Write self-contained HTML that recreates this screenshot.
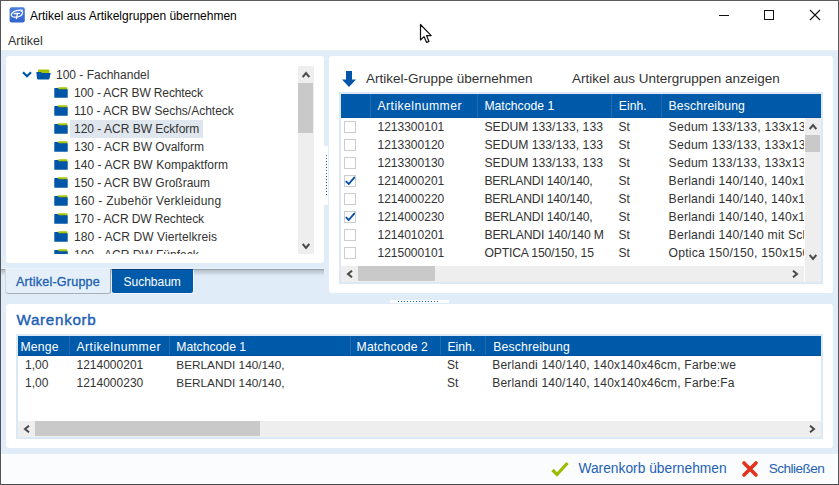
<!DOCTYPE html>
<html><head><meta charset="utf-8">
<style>
*{margin:0;padding:0;box-sizing:border-box}
html,body{width:839px;height:485px;overflow:hidden;background:#fff}
body{position:relative;font-family:"Liberation Sans",sans-serif;font-size:12px;color:#333}
.a{position:absolute}
.t{position:absolute;white-space:nowrap}
.clip{position:absolute;overflow:hidden}
</style></head><body>

<svg class="a" style="left:9px;top:7px" width="16" height="16" viewBox="0 0 16 16">
  <defs><linearGradient id="ig" x1="0" y1="0" x2="0" y2="1"><stop offset="0" stop-color="#4a7ee0"/><stop offset="1" stop-color="#3265cc"/></linearGradient></defs>
  <rect x="0.6" y="0.2" width="15.2" height="15.2" rx="2" fill="url(#ig)"/>
  <path d="M13.8 3.4 C10 2.6 4.5 3.6 2.6 6.6 C1.4 8.6 3.2 10.2 6.2 10.2 C9.8 10.2 13.6 8.4 13.6 5.6 C13.6 4.8 12.8 4.3 11.6 4.2" fill="none" stroke="#fff" stroke-width="1.25"/>
  <path d="M4.6 6.9 C5.5 6.4 7 6.5 10.9 6.3 M8.6 6.4 L7.3 12.2" fill="none" stroke="#fff" stroke-width="1.35"/>
</svg>
<div class="t" style="left:30px;top:8.34px;font-size:12px;line-height:17px;color:#000;font-weight:normal;">Artikel aus Artikelgruppen übernehmen</div>
<div class="a" style="left:719px;top:15px;width:10px;height:1px;background:#111;"></div>
<div class="a" style="left:764px;top:10px;width:10px;height:10px;border:1px solid #111"></div>
<svg class="a" style="left:809px;top:9px" width="12" height="12" viewBox="0 0 12 12"><path d="M1 1 L11 11 M11 1 L1 11" stroke="#111" stroke-width="1.1"/></svg>
<svg class="a" style="left:419px;top:23px" width="14" height="21" viewBox="0 0 14 21"><path d="M1.5 1.5 L1.5 17 L5 13.6 L7.6 19.4 L10 18.4 L7.5 12.6 L12.2 12.6 Z" fill="#fff" stroke="#111" stroke-width="1.2" stroke-linejoin="round"/></svg>
<div class="t" style="left:8px;top:31.67px;font-size:12.5px;line-height:18px;color:#333;font-weight:normal;">Artikel</div>
<div class="a" style="left:1px;top:50px;width:837px;height:1px;background:#eaeef2;"></div>
<div class="a" style="left:1px;top:51px;width:837px;height:403px;background:#e0edf9;"></div>
<div class="a" style="left:6px;top:56px;width:318px;height:207px;background:#fff;border-radius:3px"></div>
<div class="clip" style="left:6px;top:60px;width:290px;height:194px">
<svg class="a" style="left:16px;top:11px" width="10" height="8" viewBox="0 0 10 8"><path d="M1 1.3 L5 5.3 L9 1.3" fill="none" stroke="#0156a8" stroke-width="2.2"/></svg>
<div class="a" style="left:30px;top:9px">
<svg class="a" style="left:0px;top:0px" width="15" height="11" viewBox="0 0 15 11"><path d="M2 0.5 H12.5 Q13.3 0.5 13.3 1.3 V4 H2 Z" fill="#a8c400"/><path d="M0.3 3 H5 L6 4 H14.7 L13.5 9.6 Q13.3 10.5 12.4 10.5 H2.2 Q1.2 10.5 1 9.6 Z" fill="#0156a8"/></svg>
</div>
<div class="t" style="left:50px;top:7.34px;font-size:12px;line-height:17px;color:#333;font-weight:normal;">100 - Fachhandel</div>
<div class="a" style="left:48px;top:27px">
<svg class="a" style="left:0px;top:0px" width="14" height="11" viewBox="0 0 15 11" preserveAspectRatio="none"><path d="M4.5 0.3 H13.6 Q14.3 0.3 14.3 1 V4 H4.5 Z" fill="#a8c400"/><path d="M0.3 1.6 Q0.3 1 1 1 H4.2 L5.4 2.2 H14.7 V10.3 Q14.7 10.7 14.3 10.7 H0.7 Q0.3 10.7 0.3 10.3 Z" fill="#0156a8"/></svg>
</div>
<div class="t" style="left:68px;top:25.34px;font-size:12px;line-height:17px;color:#333;font-weight:normal;letter-spacing:-0.12px;">100 - ACR BW Rechteck</div>
<div class="a" style="left:48px;top:45px">
<svg class="a" style="left:0px;top:0px" width="14" height="11" viewBox="0 0 15 11" preserveAspectRatio="none"><path d="M4.5 0.3 H13.6 Q14.3 0.3 14.3 1 V4 H4.5 Z" fill="#a8c400"/><path d="M0.3 1.6 Q0.3 1 1 1 H4.2 L5.4 2.2 H14.7 V10.3 Q14.7 10.7 14.3 10.7 H0.7 Q0.3 10.7 0.3 10.3 Z" fill="#0156a8"/></svg>
</div>
<div class="t" style="left:68px;top:43.34px;font-size:12px;line-height:17px;color:#333;font-weight:normal;letter-spacing:0px;">110 - ACR BW Sechs/Achteck</div>
<div class="a" style="left:64px;top:60px;width:133px;height:18px;background:#dfe6ee;"></div>
<div class="a" style="left:48px;top:63px">
<svg class="a" style="left:0px;top:0px" width="14" height="11" viewBox="0 0 15 11" preserveAspectRatio="none"><path d="M4.5 0.3 H13.6 Q14.3 0.3 14.3 1 V4 H4.5 Z" fill="#a8c400"/><path d="M0.3 1.6 Q0.3 1 1 1 H4.2 L5.4 2.2 H14.7 V10.3 Q14.7 10.7 14.3 10.7 H0.7 Q0.3 10.7 0.3 10.3 Z" fill="#0156a8"/></svg>
</div>
<div class="t" style="left:68px;top:61.34px;font-size:12px;line-height:17px;color:#333;font-weight:normal;letter-spacing:0px;">120 - ACR BW Eckform</div>
<div class="a" style="left:48px;top:81px">
<svg class="a" style="left:0px;top:0px" width="14" height="11" viewBox="0 0 15 11" preserveAspectRatio="none"><path d="M4.5 0.3 H13.6 Q14.3 0.3 14.3 1 V4 H4.5 Z" fill="#a8c400"/><path d="M0.3 1.6 Q0.3 1 1 1 H4.2 L5.4 2.2 H14.7 V10.3 Q14.7 10.7 14.3 10.7 H0.7 Q0.3 10.7 0.3 10.3 Z" fill="#0156a8"/></svg>
</div>
<div class="t" style="left:68px;top:79.34px;font-size:12px;line-height:17px;color:#333;font-weight:normal;letter-spacing:0px;">130 - ACR BW Ovalform</div>
<div class="a" style="left:48px;top:99px">
<svg class="a" style="left:0px;top:0px" width="14" height="11" viewBox="0 0 15 11" preserveAspectRatio="none"><path d="M4.5 0.3 H13.6 Q14.3 0.3 14.3 1 V4 H4.5 Z" fill="#a8c400"/><path d="M0.3 1.6 Q0.3 1 1 1 H4.2 L5.4 2.2 H14.7 V10.3 Q14.7 10.7 14.3 10.7 H0.7 Q0.3 10.7 0.3 10.3 Z" fill="#0156a8"/></svg>
</div>
<div class="t" style="left:68px;top:97.34px;font-size:12px;line-height:17px;color:#333;font-weight:normal;letter-spacing:0.06px;">140 - ACR BW Kompaktform</div>
<div class="a" style="left:48px;top:117px">
<svg class="a" style="left:0px;top:0px" width="14" height="11" viewBox="0 0 15 11" preserveAspectRatio="none"><path d="M4.5 0.3 H13.6 Q14.3 0.3 14.3 1 V4 H4.5 Z" fill="#a8c400"/><path d="M0.3 1.6 Q0.3 1 1 1 H4.2 L5.4 2.2 H14.7 V10.3 Q14.7 10.7 14.3 10.7 H0.7 Q0.3 10.7 0.3 10.3 Z" fill="#0156a8"/></svg>
</div>
<div class="t" style="left:68px;top:115.34px;font-size:12px;line-height:17px;color:#333;font-weight:normal;letter-spacing:0px;">150 - ACR BW Großraum</div>
<div class="a" style="left:48px;top:135px">
<svg class="a" style="left:0px;top:0px" width="14" height="11" viewBox="0 0 15 11" preserveAspectRatio="none"><path d="M4.5 0.3 H13.6 Q14.3 0.3 14.3 1 V4 H4.5 Z" fill="#a8c400"/><path d="M0.3 1.6 Q0.3 1 1 1 H4.2 L5.4 2.2 H14.7 V10.3 Q14.7 10.7 14.3 10.7 H0.7 Q0.3 10.7 0.3 10.3 Z" fill="#0156a8"/></svg>
</div>
<div class="t" style="left:68px;top:133.34px;font-size:12px;line-height:17px;color:#333;font-weight:normal;letter-spacing:0.24px;">160 - Zubehör Verkleidung</div>
<div class="a" style="left:48px;top:153px">
<svg class="a" style="left:0px;top:0px" width="14" height="11" viewBox="0 0 15 11" preserveAspectRatio="none"><path d="M4.5 0.3 H13.6 Q14.3 0.3 14.3 1 V4 H4.5 Z" fill="#a8c400"/><path d="M0.3 1.6 Q0.3 1 1 1 H4.2 L5.4 2.2 H14.7 V10.3 Q14.7 10.7 14.3 10.7 H0.7 Q0.3 10.7 0.3 10.3 Z" fill="#0156a8"/></svg>
</div>
<div class="t" style="left:68px;top:151.34px;font-size:12px;line-height:17px;color:#333;font-weight:normal;letter-spacing:-0.1px;">170 - ACR DW Rechteck</div>
<div class="a" style="left:48px;top:171px">
<svg class="a" style="left:0px;top:0px" width="14" height="11" viewBox="0 0 15 11" preserveAspectRatio="none"><path d="M4.5 0.3 H13.6 Q14.3 0.3 14.3 1 V4 H4.5 Z" fill="#a8c400"/><path d="M0.3 1.6 Q0.3 1 1 1 H4.2 L5.4 2.2 H14.7 V10.3 Q14.7 10.7 14.3 10.7 H0.7 Q0.3 10.7 0.3 10.3 Z" fill="#0156a8"/></svg>
</div>
<div class="t" style="left:68px;top:169.34px;font-size:12px;line-height:17px;color:#333;font-weight:normal;letter-spacing:0.08px;">180 - ACR DW Viertelkreis</div>
<div class="a" style="left:48px;top:189px">
<svg class="a" style="left:0px;top:0px" width="14" height="11" viewBox="0 0 15 11" preserveAspectRatio="none"><path d="M4.5 0.3 H13.6 Q14.3 0.3 14.3 1 V4 H4.5 Z" fill="#a8c400"/><path d="M0.3 1.6 Q0.3 1 1 1 H4.2 L5.4 2.2 H14.7 V10.3 Q14.7 10.7 14.3 10.7 H0.7 Q0.3 10.7 0.3 10.3 Z" fill="#0156a8"/></svg>
</div>
<div class="t" style="left:68px;top:187.34px;font-size:12px;line-height:17px;color:#333;font-weight:normal;letter-spacing:0px;">190 - ACR DW Fünfeck</div>
</div>
<div class="a" style="left:298px;top:66px;width:16px;height:188px;background:#eeeeee;"></div>
<div class="a" style="left:298px;top:83px;width:15px;height:50px;background:#c9c9c9;"></div>
<svg class="a" style="left:302px;top:71px" width="8" height="7" viewBox="0 0 8 7"><path d="M0.7 6 L4 2 L7.3 6" fill="none" stroke="#4a4a4a" stroke-width="2"/></svg>
<svg class="a" style="left:302px;top:243px" width="8" height="7" viewBox="0 0 8 7"><path d="M0.7 1 L4 5 L7.3 1" fill="none" stroke="#4a4a4a" stroke-width="2"/></svg>
<div class="a" style="left:324px;top:146px;width:4px;height:59px;background:#fff;"></div>
<div class="a" style="left:326px;top:155px;width:1px;height:1px;background:#1f64b4;"></div>
<div class="a" style="left:326px;top:158px;width:1px;height:1px;background:#1f64b4;"></div>
<div class="a" style="left:326px;top:161px;width:1px;height:1px;background:#1f64b4;"></div>
<div class="a" style="left:326px;top:164px;width:1px;height:1px;background:#1f64b4;"></div>
<div class="a" style="left:326px;top:167px;width:1px;height:1px;background:#1f64b4;"></div>
<div class="a" style="left:326px;top:170px;width:1px;height:1px;background:#1f64b4;"></div>
<div class="a" style="left:326px;top:173px;width:1px;height:1px;background:#1f64b4;"></div>
<div class="a" style="left:326px;top:176px;width:1px;height:1px;background:#1f64b4;"></div>
<div class="a" style="left:326px;top:179px;width:1px;height:1px;background:#1f64b4;"></div>
<div class="a" style="left:326px;top:182px;width:1px;height:1px;background:#1f64b4;"></div>
<div class="a" style="left:326px;top:185px;width:1px;height:1px;background:#1f64b4;"></div>
<div class="a" style="left:326px;top:188px;width:1px;height:1px;background:#1f64b4;"></div>
<div class="a" style="left:326px;top:191px;width:1px;height:1px;background:#1f64b4;"></div>
<div class="a" style="left:326px;top:194px;width:1px;height:1px;background:#1f64b4;"></div>
<div class="a" style="left:1px;top:268px;width:323px;height:1px;background:#e8f3fd"></div>
<div class="a" style="left:1px;top:269px;width:323px;height:1px;background:#96a1ab"></div>
<div class="a" style="left:1px;top:270px;width:323px;height:6px;background:linear-gradient(#b4bec8,#e0edf9)"></div>
<div class="a" style="left:5px;top:269px;width:106px;height:25px;background:linear-gradient(90deg,#b8c0c8,#e8eef5 1px,#e8eef5 104px,#9aa3ad 105px);border-radius:0 0 3px 3px"></div>
<div class="a" style="left:6px;top:269px;width:104px;height:24px;background:#e4eff9;border-radius:0 0 2px 2px;box-shadow:0 1px 0 #a6aeb6"></div>
<div class="t" style="left:16px;top:273.13px;font-size:12.6px;line-height:18px;color:#1b5eb0;font-weight:normal;letter-spacing:0.2px;-webkit-text-stroke:0.3px #1b5eb0;">Artikel-Gruppe</div>
<div class="a" style="left:112px;top:269px;width:81px;height:24px;background:#005aaa;border-top:1px solid #003e7e;border-radius:0 0 2px 2px;box-shadow:1px 1px 0 #f4f8fc"></div>
<div class="t" style="left:123.5px;top:274.34px;font-size:12px;line-height:17px;color:#fff;font-weight:normal;">Suchbaum</div>
<div class="a" style="left:329px;top:56px;width:504px;height:237px;background:#fff;border-radius:3px"></div>
<svg class="a" style="left:342px;top:71px" width="14" height="16" viewBox="0 0 14 16"><path d="M4 0 H10 V8.4 H14 L7 15.9 L0 8.4 H4 Z" fill="#0156a8"/></svg>
<div class="t" style="left:366px;top:69.22px;font-size:13.5px;line-height:19px;color:#333;font-weight:normal;">Artikel-Gruppe übernehmen</div>
<div class="t" style="left:572px;top:69.22px;font-size:13.5px;line-height:19px;color:#333;font-weight:normal;">Artikel aus Untergruppen anzeigen</div>
<div class="a" style="left:339px;top:92px;width:484px;height:192px;background:#dbe8f6;"></div>
<div class="a" style="left:341px;top:94px;width:480px;height:188px;background:#fff;"></div>
<div class="a" style="left:341px;top:94px;width:480px;height:24px;background:#005aaa;"></div>
<div class="a" style="left:341px;top:117px;width:480px;height:1px;background:#00509f;"></div>
<div class="a" style="left:370px;top:94px;width:1px;height:24px;background:#2767b0;"></div>
<div class="a" style="left:477px;top:94px;width:1px;height:24px;background:#2767b0;"></div>
<div class="a" style="left:611px;top:94px;width:1px;height:24px;background:#2767b0;"></div>
<div class="a" style="left:661px;top:94px;width:1px;height:24px;background:#2767b0;"></div>
<div class="t" style="left:377.5px;top:98.47px;font-size:12.2px;line-height:17px;color:#fff;font-weight:normal;letter-spacing:0.45px;">Artikelnummer</div>
<div class="t" style="left:484.4px;top:98.47px;font-size:12.2px;line-height:17px;color:#fff;font-weight:normal;">Matchcode 1</div>
<div class="t" style="left:618.8px;top:98.47px;font-size:12.2px;line-height:17px;color:#fff;font-weight:normal;">Einh.</div>
<div class="t" style="left:668.4px;top:98.47px;font-size:12.2px;line-height:17px;color:#fff;font-weight:normal;letter-spacing:0.18px;">Beschreibung</div>
<div class="clip" style="left:341px;top:118px;width:464px;height:148px">
<div class="a" style="left:3px;top:3px;width:12px;height:12px;border:1px solid #cdcdcd;background:#fff"></div>
<div class="t" style="left:36.5px;top:1.34px;font-size:12px;line-height:17px;color:#333;font-weight:normal;">1213300101</div>
<div class="t" style="left:143.39999999999998px;top:1.27px;font-size:12.2px;line-height:17px;color:#333;font-weight:normal;letter-spacing:0px;">SEDUM 133/133, 133</div>
<div class="t" style="left:277.5px;top:1.34px;font-size:12px;line-height:17px;color:#333;font-weight:normal;">St</div>
<div class="clip" style="left:327px;top:-1px;width:136px;height:18px">
<div class="t" style="left:0.6px;top:2.27px;font-size:12.2px;line-height:17px;color:#333;font-weight:normal;letter-spacing:0.2px;">Sedum 133/133, 133x133x46cm</div>
</div>
<div class="a" style="left:3px;top:21px;width:12px;height:12px;border:1px solid #cdcdcd;background:#fff"></div>
<div class="t" style="left:36.5px;top:19.34px;font-size:12px;line-height:17px;color:#333;font-weight:normal;">1213300120</div>
<div class="t" style="left:143.39999999999998px;top:19.27px;font-size:12.2px;line-height:17px;color:#333;font-weight:normal;letter-spacing:0px;">SEDUM 133/133, 133</div>
<div class="t" style="left:277.5px;top:19.34px;font-size:12px;line-height:17px;color:#333;font-weight:normal;">St</div>
<div class="clip" style="left:327px;top:17px;width:136px;height:18px">
<div class="t" style="left:0.6px;top:2.27px;font-size:12.2px;line-height:17px;color:#333;font-weight:normal;letter-spacing:0.2px;">Sedum 133/133, 133x133x46cm</div>
</div>
<div class="a" style="left:3px;top:39px;width:12px;height:12px;border:1px solid #cdcdcd;background:#fff"></div>
<div class="t" style="left:36.5px;top:37.34px;font-size:12px;line-height:17px;color:#333;font-weight:normal;">1213300130</div>
<div class="t" style="left:143.39999999999998px;top:37.27px;font-size:12.2px;line-height:17px;color:#333;font-weight:normal;letter-spacing:0px;">SEDUM 133/133, 133</div>
<div class="t" style="left:277.5px;top:37.34px;font-size:12px;line-height:17px;color:#333;font-weight:normal;">St</div>
<div class="clip" style="left:327px;top:35px;width:136px;height:18px">
<div class="t" style="left:0.6px;top:2.27px;font-size:12.2px;line-height:17px;color:#333;font-weight:normal;letter-spacing:0.2px;">Sedum 133/133, 133x133x46cm</div>
</div>
<div class="a" style="left:3px;top:57px;width:12px;height:12px;border:1px solid #cdcdcd;background:#fff"></div>
<svg class="a" style="left:3px;top:57px" width="12" height="12" viewBox="0 0 12 12"><path d="M2.3 6.6 L4.8 9 L10.2 2.6" fill="none" stroke="#0a52a6" stroke-width="1.9" stroke-linecap="round" stroke-linejoin="round"/></svg>
<div class="t" style="left:36.5px;top:55.34px;font-size:12px;line-height:17px;color:#333;font-weight:normal;">1214000201</div>
<div class="t" style="left:143.39999999999998px;top:55.27px;font-size:12.2px;line-height:17px;color:#333;font-weight:normal;letter-spacing:-0.22px;">BERLANDI 140/140,</div>
<div class="t" style="left:277.5px;top:55.34px;font-size:12px;line-height:17px;color:#333;font-weight:normal;">St</div>
<div class="clip" style="left:327px;top:53px;width:136px;height:18px">
<div class="t" style="left:0.6px;top:2.27px;font-size:12.2px;line-height:17px;color:#333;font-weight:normal;letter-spacing:0.2px;">Berlandi 140/140, 140x140x46cm</div>
</div>
<div class="a" style="left:3px;top:75px;width:12px;height:12px;border:1px solid #cdcdcd;background:#fff"></div>
<div class="t" style="left:36.5px;top:73.34px;font-size:12px;line-height:17px;color:#333;font-weight:normal;">1214000220</div>
<div class="t" style="left:143.39999999999998px;top:73.27px;font-size:12.2px;line-height:17px;color:#333;font-weight:normal;letter-spacing:-0.22px;">BERLANDI 140/140,</div>
<div class="t" style="left:277.5px;top:73.34px;font-size:12px;line-height:17px;color:#333;font-weight:normal;">St</div>
<div class="clip" style="left:327px;top:71px;width:136px;height:18px">
<div class="t" style="left:0.6px;top:2.27px;font-size:12.2px;line-height:17px;color:#333;font-weight:normal;letter-spacing:0.2px;">Berlandi 140/140, 140x140x46cm</div>
</div>
<div class="a" style="left:3px;top:93px;width:12px;height:12px;border:1px solid #cdcdcd;background:#fff"></div>
<svg class="a" style="left:3px;top:93px" width="12" height="12" viewBox="0 0 12 12"><path d="M2.3 6.6 L4.8 9 L10.2 2.6" fill="none" stroke="#0a52a6" stroke-width="1.9" stroke-linecap="round" stroke-linejoin="round"/></svg>
<div class="t" style="left:36.5px;top:91.34px;font-size:12px;line-height:17px;color:#333;font-weight:normal;">1214000230</div>
<div class="t" style="left:143.39999999999998px;top:91.27px;font-size:12.2px;line-height:17px;color:#333;font-weight:normal;letter-spacing:-0.22px;">BERLANDI 140/140,</div>
<div class="t" style="left:277.5px;top:91.34px;font-size:12px;line-height:17px;color:#333;font-weight:normal;">St</div>
<div class="clip" style="left:327px;top:89px;width:136px;height:18px">
<div class="t" style="left:0.6px;top:2.27px;font-size:12.2px;line-height:17px;color:#333;font-weight:normal;letter-spacing:0.2px;">Berlandi 140/140, 140x140x46cm</div>
</div>
<div class="a" style="left:3px;top:111px;width:12px;height:12px;border:1px solid #cdcdcd;background:#fff"></div>
<div class="t" style="left:36.5px;top:109.34px;font-size:12px;line-height:17px;color:#333;font-weight:normal;">1214010201</div>
<div class="t" style="left:143.39999999999998px;top:109.27px;font-size:12.2px;line-height:17px;color:#333;font-weight:normal;letter-spacing:-0.14px;">BERLANDI 140/140 M</div>
<div class="t" style="left:277.5px;top:109.34px;font-size:12px;line-height:17px;color:#333;font-weight:normal;">St</div>
<div class="clip" style="left:327px;top:107px;width:136px;height:18px">
<div class="t" style="left:0.6px;top:2.27px;font-size:12.2px;line-height:17px;color:#333;font-weight:normal;letter-spacing:0.2px;">Berlandi 140/140 mit Schale</div>
</div>
<div class="a" style="left:3px;top:129px;width:12px;height:12px;border:1px solid #cdcdcd;background:#fff"></div>
<div class="t" style="left:36.5px;top:127.34px;font-size:12px;line-height:17px;color:#333;font-weight:normal;">1215000101</div>
<div class="t" style="left:143.39999999999998px;top:127.27px;font-size:12.2px;line-height:17px;color:#333;font-weight:normal;letter-spacing:-0.17px;">OPTICA 150/150, 15</div>
<div class="t" style="left:277.5px;top:127.34px;font-size:12px;line-height:17px;color:#333;font-weight:normal;">St</div>
<div class="clip" style="left:327px;top:125px;width:136px;height:18px">
<div class="t" style="left:0.6px;top:2.27px;font-size:12.2px;line-height:17px;color:#333;font-weight:normal;letter-spacing:0.2px;">Optica 150/150, 150x150x46cm</div>
</div>
</div>
<div class="a" style="left:805px;top:118px;width:16px;height:164px;background:#eeeeee;"></div>
<div class="a" style="left:805px;top:135px;width:15px;height:17px;background:#c9c9c9;"></div>
<svg class="a" style="left:809px;top:123px" width="8" height="7" viewBox="0 0 8 7"><path d="M0.7 6 L4 2 L7.3 6" fill="none" stroke="#4a4a4a" stroke-width="2"/></svg>
<svg class="a" style="left:809px;top:254px" width="8" height="7" viewBox="0 0 8 7"><path d="M0.7 1 L4 5 L7.3 1" fill="none" stroke="#4a4a4a" stroke-width="2"/></svg>
<div class="a" style="left:341px;top:266px;width:463px;height:16px;background:#eeeeee;"></div>
<div class="a" style="left:358px;top:266px;width:77px;height:15px;background:#c9c9c9;"></div>
<svg class="a" style="left:346px;top:270px" width="7" height="8" viewBox="0 0 7 8"><path d="M6 0.7 L2 4 L6 7.3" fill="none" stroke="#4a4a4a" stroke-width="2"/></svg>
<svg class="a" style="left:792px;top:270px" width="7" height="8" viewBox="0 0 7 8"><path d="M1 0.7 L5 4 L1 7.3" fill="none" stroke="#4a4a4a" stroke-width="2"/></svg>
<div class="a" style="left:390px;top:300px;width:59px;height:3px;background:#fff;"></div>
<div class="a" style="left:398px;top:301px;width:1px;height:1px;background:#1f64b4;"></div>
<div class="a" style="left:401px;top:301px;width:1px;height:1px;background:#1f64b4;"></div>
<div class="a" style="left:404px;top:301px;width:1px;height:1px;background:#1f64b4;"></div>
<div class="a" style="left:407px;top:301px;width:1px;height:1px;background:#1f64b4;"></div>
<div class="a" style="left:410px;top:301px;width:1px;height:1px;background:#1f64b4;"></div>
<div class="a" style="left:413px;top:301px;width:1px;height:1px;background:#1f64b4;"></div>
<div class="a" style="left:416px;top:301px;width:1px;height:1px;background:#1f64b4;"></div>
<div class="a" style="left:419px;top:301px;width:1px;height:1px;background:#1f64b4;"></div>
<div class="a" style="left:422px;top:301px;width:1px;height:1px;background:#1f64b4;"></div>
<div class="a" style="left:425px;top:301px;width:1px;height:1px;background:#1f64b4;"></div>
<div class="a" style="left:428px;top:301px;width:1px;height:1px;background:#1f64b4;"></div>
<div class="a" style="left:431px;top:301px;width:1px;height:1px;background:#1f64b4;"></div>
<div class="a" style="left:434px;top:301px;width:1px;height:1px;background:#1f64b4;"></div>
<div class="a" style="left:437px;top:301px;width:1px;height:1px;background:#1f64b4;"></div>
<div class="a" style="left:6px;top:304px;width:827px;height:144px;background:#fff;border-radius:3px"></div>
<div class="t" style="left:16.5px;top:309.13px;font-size:15.2px;line-height:21px;color:#1b60b4;font-weight:normal;letter-spacing:0.7px;-webkit-text-stroke:0.4px #1b60b4;">Warenkorb</div>
<div class="a" style="left:16px;top:334px;width:807px;height:105px;background:#dbe8f6;"></div>
<div class="a" style="left:18px;top:336px;width:803px;height:101px;background:#fff;"></div>
<div class="a" style="left:18px;top:336px;width:803px;height:20px;background:#005aaa;"></div>
<div class="a" style="left:18px;top:355px;width:803px;height:1px;background:#00509f;"></div>
<div class="a" style="left:69px;top:336px;width:1px;height:19px;background:#2767b0;"></div>
<div class="a" style="left:169px;top:336px;width:1px;height:19px;background:#2767b0;"></div>
<div class="a" style="left:350px;top:336px;width:1px;height:19px;background:#2767b0;"></div>
<div class="a" style="left:440px;top:336px;width:1px;height:19px;background:#2767b0;"></div>
<div class="a" style="left:485px;top:336px;width:1px;height:19px;background:#2767b0;"></div>
<div class="t" style="left:20.5px;top:338.87px;font-size:12.2px;line-height:17px;color:#fff;font-weight:normal;letter-spacing:0.2px;">Menge</div>
<div class="t" style="left:76.5px;top:338.87px;font-size:12.2px;line-height:17px;color:#fff;font-weight:normal;letter-spacing:0.45px;">Artikelnummer</div>
<div class="t" style="left:176.3px;top:338.87px;font-size:12.2px;line-height:17px;color:#fff;font-weight:normal;">Matchcode 1</div>
<div class="t" style="left:356.6px;top:338.87px;font-size:12.2px;line-height:17px;color:#fff;font-weight:normal;letter-spacing:0.15px;">Matchcode 2</div>
<div class="t" style="left:447.4px;top:338.87px;font-size:12.2px;line-height:17px;color:#fff;font-weight:normal;">Einh.</div>
<div class="t" style="left:493.2px;top:338.87px;font-size:12.2px;line-height:17px;color:#fff;font-weight:normal;letter-spacing:0.18px;">Beschreibung</div>
<div class="t" style="left:25px;top:357.34px;font-size:12px;line-height:17px;color:#333;font-weight:normal;">1,00</div>
<div class="t" style="left:76.5px;top:357.34px;font-size:12px;line-height:17px;color:#333;font-weight:normal;">1214000201</div>
<div class="t" style="left:176.3px;top:357.41px;font-size:11.8px;line-height:17px;color:#333;font-weight:normal;">BERLANDI 140/140,</div>
<div class="t" style="left:447px;top:357.34px;font-size:12px;line-height:17px;color:#333;font-weight:normal;">St</div>
<div class="t" style="left:492.2px;top:357.34px;font-size:12px;line-height:17px;color:#333;font-weight:normal;letter-spacing:0.21px;">Berlandi 140/140, 140x140x46cm, Farbe:we</div>
<div class="t" style="left:25px;top:375.34px;font-size:12px;line-height:17px;color:#333;font-weight:normal;">1,00</div>
<div class="t" style="left:76.5px;top:375.34px;font-size:12px;line-height:17px;color:#333;font-weight:normal;">1214000230</div>
<div class="t" style="left:176.3px;top:375.41px;font-size:11.8px;line-height:17px;color:#333;font-weight:normal;">BERLANDI 140/140,</div>
<div class="t" style="left:447px;top:375.34px;font-size:12px;line-height:17px;color:#333;font-weight:normal;">St</div>
<div class="t" style="left:492.2px;top:375.34px;font-size:12px;line-height:17px;color:#333;font-weight:normal;letter-spacing:0.21px;">Berlandi 140/140, 140x140x46cm, Farbe:Fa</div>
<div class="a" style="left:18px;top:421px;width:803px;height:16px;background:#eeeeee;"></div>
<div class="a" style="left:35px;top:421px;width:225px;height:15px;background:#c9c9c9;"></div>
<svg class="a" style="left:23px;top:425px" width="7" height="8" viewBox="0 0 7 8"><path d="M6 0.7 L2 4 L6 7.3" fill="none" stroke="#4a4a4a" stroke-width="2"/></svg>
<svg class="a" style="left:809px;top:425px" width="7" height="8" viewBox="0 0 7 8"><path d="M1 0.7 L5 4 L1 7.3" fill="none" stroke="#4a4a4a" stroke-width="2"/></svg>
<div class="a" style="left:1px;top:454px;width:837px;height:30px;background:#fafcfe;"></div>
<svg class="a" style="left:551px;top:461px" width="18" height="16" viewBox="0 0 18 16"><path d="M1.5 9 L6 13.5 L16.5 2" fill="none" stroke="#9cbc00" stroke-width="3.2"/></svg>
<div class="t" style="left:578.4px;top:459.42px;font-size:13.8px;line-height:19px;color:#1f62b2;font-weight:normal;">Warenkorb übernehmen</div>
<svg class="a" style="left:741px;top:460px" width="18" height="18" viewBox="0 0 18 18"><path d="M3 3 L15 15 M15 3 L3 15" fill="none" stroke="#e3331c" stroke-width="3.6" stroke-linecap="round"/></svg>
<div class="t" style="left:768.7px;top:459.49px;font-size:13.6px;line-height:19px;color:#1f62b2;font-weight:normal;letter-spacing:-0.55px;">Schließen</div>
<div class="a" style="left:0px;top:0px;width:839px;height:1px;background:#5b5b5b;"></div>
<div class="a" style="left:0px;top:0px;width:1px;height:485px;background:#545458;"></div>
<div class="a" style="left:838px;top:0px;width:1px;height:485px;background:#56565a;"></div>
<div class="a" style="left:0px;top:484px;width:839px;height:1px;background:#4a4a4a;"></div>
</body></html>
